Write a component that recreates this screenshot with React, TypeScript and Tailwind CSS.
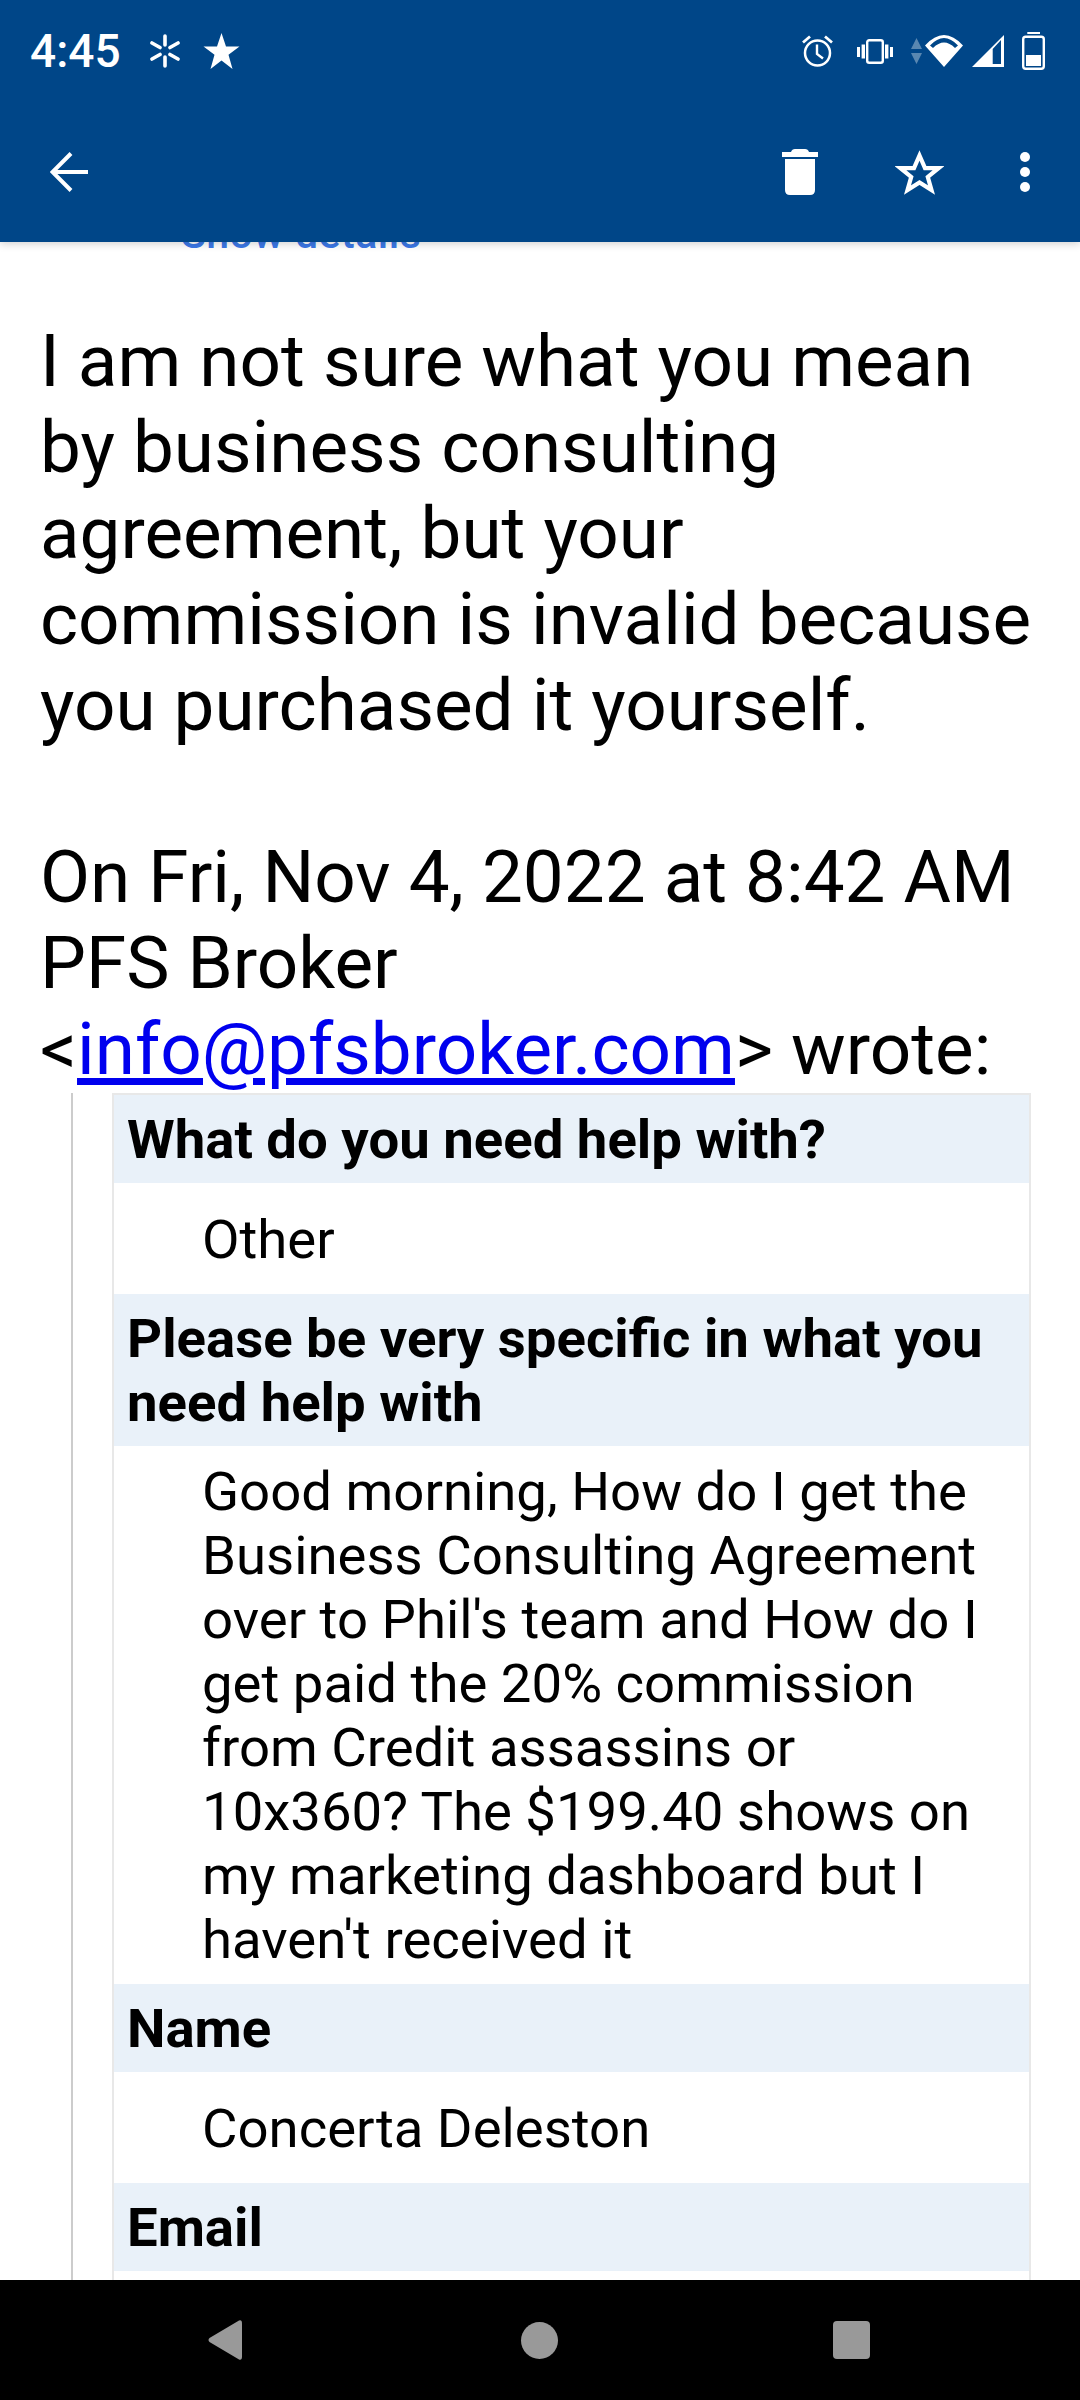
const fieldRows = [
  { label: ['What do you need help with?'], value: ['Other'] },
  { label: ['Please be very specific in what you', 'need help with'], value: [
    'Good morning, How do I get the',
    'Business Consulting Agreement',
    "over to Phil's team and How do I",
    'get paid the 20% commission',
    'from Credit assassins or',
    '10x360? The $199.40 shows on',
    'my marketing dashboard but I',
    "haven't received it",
  ] },
  { label: ['Name'], value: ['Concerta Deleston'] },
]

const StatusIcons = () => (
  <div className="flex items-center">
    <svg width="31" height="32" viewBox="0 0 31 32" className="mr-[24px]" fill="none" stroke="white">
      <circle cx="15.500" cy="18" r="12.500" strokeWidth="2.500" />
      <path d="M15 9.500V19l6 4.500" strokeWidth="2.400" />
      <path d="M1 7.500 8 1.500M30 7.500 23 1.500" strokeWidth="2.800" />
    </svg>
    <svg width="36" height="25" viewBox="0 0 36 25" className="mr-[18px]" fill="none" stroke="white">
      <rect x="10.200" y="1.200" width="15.600" height="22.600" rx="2" strokeWidth="2.400" />
      <path d="M6.300 5.500v14M29.700 5.500v14" strokeWidth="3.400" />
      <path d="M1.500 8v10M34.500 8v10" strokeWidth="3" />
    </svg>
    <svg width="11" height="26" viewBox="0 0 11 26" fill="white" opacity="0.35" className="mr-[3px]">
      <path d="M5.500 0 11 11H0ZM0 15h11L5.500 26Z" />
    </svg>
    <svg width="38" height="32" viewBox="0 0 38 32" fill="white" className="mr-[9px]">
      <path fillRule="evenodd" d="M19 32 0 10.500Q19-10.500 38 10.500ZM5 10.500 8 13Q19 2 30 13L33 10.500Q19-4.500 5 10.500Z" />
    </svg>
    <svg width="32" height="32" viewBox="0 0 32 32" fill="white" className="mr-[18px]">
      <path fillRule="evenodd" d="M32 0v32H0ZM29 5 20.700 14v15H29Z" />
    </svg>
    <svg width="23" height="38" viewBox="0 0 23 38" fill="none">
      <rect x="5.300" y="0" width="12.700" height="2" fill="white" />
      <rect x="1.200" y="4.800" width="20.600" height="32" rx="2.500" stroke="white" strokeWidth="2.400" />
      <rect x="4" y="23" width="15" height="11" fill="white" />
    </svg>
  </div>
)

const AppBar = () => (
  <header className="shrink-0 h-[242px] bg-[#004688] text-white relative z-10 shadow-[0_2px_8px_rgba(0,0,0,0.18)]">
    <div className="h-[102px] pl-[30px] pr-[35px] flex items-center justify-between">
      <div className="flex items-center">
        <span className="text-[46px] font-medium leading-none">4:45</span>
        <svg width="30" height="34" viewBox="0 0 30 34" className="ml-[29px]" stroke="white" strokeWidth="3.600" strokeLinecap="round">
          <path d="M15 2v9M15 23v9M2 9l8 4.500M28 9l-8 4.500M2 25l8-4.500M28 25l-8-4.500" />
        </svg>
        <svg width="37" height="36" viewBox="0 0 36 36" fill="white" className="ml-[23px]">
          <path d="M18 0l4.500 13.500H36L25 21.800 29 36 18 27.500 7 36l4-14.200L0 13.500h13.500Z" />
        </svg>
      </div>
      <StatusIcons />
    </div>
    <div className="h-[140px] pl-[50px] pr-[50px] flex items-center justify-between">
      <svg width="38" height="40" viewBox="0 0 38 40" fill="none" stroke="white" strokeWidth="4">
        <path d="M38 20H3M21 1.500 2.500 20 21 38.500" />
      </svg>
      <div className="flex items-center">
        <svg width="36" height="46" viewBox="0 0 36 46" fill="white" className="mr-[77px]">
          <path d="M0 3h9q1-3 4-3h10q3 0 4 3h9v5H0ZM3 10h30v31q0 5-5 5H8q-5 0-5-5Z" />
        </svg>
        <svg width="49" height="46" viewBox="0 0 49 46" fill="none" stroke="white" strokeWidth="4.200" className="mr-[76px]">
          <path d="M24.500 6.500 30 19.200H43.500L32.800 28 36.500 41 24.500 33.500 12.500 41 16.200 28 5.500 19.200H19Z" />
        </svg>
        <svg width="10" height="40" viewBox="0 0 10 40" fill="white">
          <circle cx="5" cy="5" r="5" /><circle cx="5" cy="20" r="5" /><circle cx="5" cy="35" r="5" />
        </svg>
      </div>
    </div>
  </header>
)

const NavBar = () => (
  <footer className="shrink-0 h-[120px] bg-black flex items-center relative z-10">
    <svg width="34" height="40" viewBox="0 0 34 40" fill="#999999" className="ml-[208px]">
      <path d="M31 0.500q3-1 3 3v33q0 4-3 3L1.500 22q-2-2 0-4Z" />
    </svg>
    <div className="ml-[279px] w-[37px] h-[37px] rounded-full bg-[#999999]" />
    <div className="ml-[275px] w-[37px] h-[38px] rounded-[4px] bg-[#999999]" />
  </footer>
)

const Lines = ({ lines }: { lines: string[] }) => (
  <>
    {lines.map((line) => (
      <div key={line} className="whitespace-nowrap">{line}</div>
    ))}
  </>
)

export default function App() {
  return (
    <div className="h-[2400px] w-[1080px] flex flex-col overflow-hidden bg-white text-black font-['Roboto',sans-serif]">
      <AppBar />
      <main className="flex-1 min-h-0 overflow-hidden">
        <div className="h-[8px] overflow-hidden pl-[181px]">
          <div className="-mt-[32px] text-[#3b78e7] text-[41px] leading-[48px] font-medium tracking-[0.5px] whitespace-nowrap">Show details</div>
        </div>
        <div className="pl-[40px] pt-[68px] text-[72.8px] leading-[86px] whitespace-nowrap">
          <div>I am not sure what you mean</div>
          <div>by business consulting</div>
          <div>agreement, but your</div>
          <div>commission is invalid because</div>
          <div>you purchased it yourself.</div>
          <div className="h-[86px]" />
          <div>On Fri, Nov 4, 2022 at 8:42 AM</div>
          <div>PFS Broker</div>
          <div>&lt;<a href="#" className="text-[#0000ee] underline">info@pfsbroker.com</a>&gt; wrote:</div>
        </div>
        <div className="ml-[71px] mt-[1px] border-l-2 border-[#cccccc] pl-[39px]">
          <div className="w-[919px] border-2 border-b-0 border-[#e8e8e8] text-[54.5px] leading-[64px]">
            {fieldRows.map((row) => (
              <div key={row.label[0]}>
                <div className="bg-[#e9f1f9] px-[13px] py-[12px] font-bold">
                  <Lines lines={row.label} />
                </div>
                <div className="min-h-[111px] pl-[88px] py-[13px] flex flex-col justify-center">
                  <Lines lines={row.value} />
                </div>
              </div>
            ))}
            <div className="bg-[#e9f1f9] px-[13px] py-[12px] font-bold">Email</div>
            <div className="h-[200px]" />
          </div>
        </div>
      </main>
      <NavBar />
    </div>
  )
}
